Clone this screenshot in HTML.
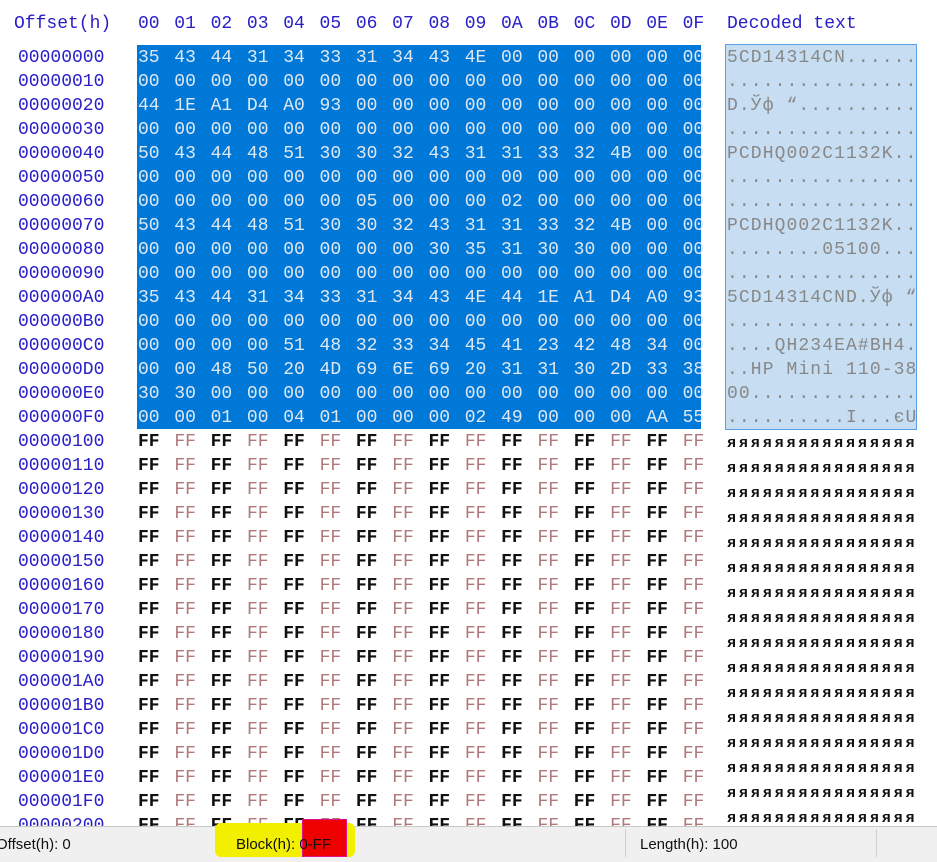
<!DOCTYPE html>
<html><head><meta charset="utf-8"><style>
body{margin:0;width:937px;height:861px;background:#fff;position:relative;overflow:hidden;font-family:"Liberation Mono","DejaVu Sans Mono",monospace;font-size:18px}
.hdr{position:absolute;top:12px;color:#2a20c8;white-space:pre;line-height:24px}
.col{position:absolute;top:46px;white-space:pre;line-height:24px}
.off{left:18px;color:#2a20c8}
.hex{left:138px;word-spacing:3.9px;color:#dfe8f2}
.hex b{font-weight:bold;color:#111}
.hex i{font-style:normal;color:#b07878}
.dec{left:727px;letter-spacing:1.1px;color:#888}
.dec2{color:#111;font-weight:bold;font-size:15px;letter-spacing:2.9px}
#sel{position:absolute;left:137px;top:45px;width:564px;height:384px;background:#0078d7}
#dsel{position:absolute;left:725px;top:44px;width:190px;height:384px;background:#c6ddf2;border:1px solid #5aa0e6}
#status{position:absolute;left:0;top:826px;width:937px;height:35px;background:#f0f0f0;border-top:1px solid #c8c8c8;font-family:"Liberation Sans",sans-serif;font-size:15px;color:#111}
#status span{position:absolute;top:9px}
</style></head><body>
<div id="sel"></div><div id="dsel"></div>
<div class="hdr" style="left:14px">Offset(h)</div>
<div class="hdr" style="left:138px;word-spacing:3.9px">00 01 02 03 04 05 06 07 08 09 0A 0B 0C 0D 0E 0F</div>
<div class="hdr" style="left:727px">Decoded text</div>
<div class="col off">00000000
00000010
00000020
00000030
00000040
00000050
00000060
00000070
00000080
00000090
000000A0
000000B0
000000C0
000000D0
000000E0
000000F0
00000100
00000110
00000120
00000130
00000140
00000150
00000160
00000170
00000180
00000190
000001A0
000001B0
000001C0
000001D0
000001E0
000001F0
00000200</div>
<div class="col hex">35 43 44 31 34 33 31 34 43 4E 00 00 00 00 00 00
00 00 00 00 00 00 00 00 00 00 00 00 00 00 00 00
44 1E A1 D4 A0 93 00 00 00 00 00 00 00 00 00 00
00 00 00 00 00 00 00 00 00 00 00 00 00 00 00 00
50 43 44 48 51 30 30 32 43 31 31 33 32 4B 00 00
00 00 00 00 00 00 00 00 00 00 00 00 00 00 00 00
00 00 00 00 00 00 05 00 00 00 02 00 00 00 00 00
50 43 44 48 51 30 30 32 43 31 31 33 32 4B 00 00
00 00 00 00 00 00 00 00 30 35 31 30 30 00 00 00
00 00 00 00 00 00 00 00 00 00 00 00 00 00 00 00
35 43 44 31 34 33 31 34 43 4E 44 1E A1 D4 A0 93
00 00 00 00 00 00 00 00 00 00 00 00 00 00 00 00
00 00 00 00 51 48 32 33 34 45 41 23 42 48 34 00
00 00 48 50 20 4D 69 6E 69 20 31 31 30 2D 33 38
30 30 00 00 00 00 00 00 00 00 00 00 00 00 00 00
00 00 01 00 04 01 00 00 00 02 49 00 00 00 AA 55
<b>FF</b> <i>FF</i> <b>FF</b> <i>FF</i> <b>FF</b> <i>FF</i> <b>FF</b> <i>FF</i> <b>FF</b> <i>FF</i> <b>FF</b> <i>FF</i> <b>FF</b> <i>FF</i> <b>FF</b> <i>FF</i>
<b>FF</b> <i>FF</i> <b>FF</b> <i>FF</i> <b>FF</b> <i>FF</i> <b>FF</b> <i>FF</i> <b>FF</b> <i>FF</i> <b>FF</b> <i>FF</i> <b>FF</b> <i>FF</i> <b>FF</b> <i>FF</i>
<b>FF</b> <i>FF</i> <b>FF</b> <i>FF</i> <b>FF</b> <i>FF</i> <b>FF</b> <i>FF</i> <b>FF</b> <i>FF</i> <b>FF</b> <i>FF</i> <b>FF</b> <i>FF</i> <b>FF</b> <i>FF</i>
<b>FF</b> <i>FF</i> <b>FF</b> <i>FF</i> <b>FF</b> <i>FF</i> <b>FF</b> <i>FF</i> <b>FF</b> <i>FF</i> <b>FF</b> <i>FF</i> <b>FF</b> <i>FF</i> <b>FF</b> <i>FF</i>
<b>FF</b> <i>FF</i> <b>FF</b> <i>FF</i> <b>FF</b> <i>FF</i> <b>FF</b> <i>FF</i> <b>FF</b> <i>FF</i> <b>FF</b> <i>FF</i> <b>FF</b> <i>FF</i> <b>FF</b> <i>FF</i>
<b>FF</b> <i>FF</i> <b>FF</b> <i>FF</i> <b>FF</b> <i>FF</i> <b>FF</b> <i>FF</i> <b>FF</b> <i>FF</i> <b>FF</b> <i>FF</i> <b>FF</b> <i>FF</i> <b>FF</b> <i>FF</i>
<b>FF</b> <i>FF</i> <b>FF</b> <i>FF</i> <b>FF</b> <i>FF</i> <b>FF</b> <i>FF</i> <b>FF</b> <i>FF</i> <b>FF</b> <i>FF</i> <b>FF</b> <i>FF</i> <b>FF</b> <i>FF</i>
<b>FF</b> <i>FF</i> <b>FF</b> <i>FF</i> <b>FF</b> <i>FF</i> <b>FF</b> <i>FF</i> <b>FF</b> <i>FF</i> <b>FF</b> <i>FF</i> <b>FF</b> <i>FF</i> <b>FF</b> <i>FF</i>
<b>FF</b> <i>FF</i> <b>FF</b> <i>FF</i> <b>FF</b> <i>FF</i> <b>FF</b> <i>FF</i> <b>FF</b> <i>FF</i> <b>FF</b> <i>FF</i> <b>FF</b> <i>FF</i> <b>FF</b> <i>FF</i>
<b>FF</b> <i>FF</i> <b>FF</b> <i>FF</i> <b>FF</b> <i>FF</i> <b>FF</b> <i>FF</i> <b>FF</b> <i>FF</i> <b>FF</b> <i>FF</i> <b>FF</b> <i>FF</i> <b>FF</b> <i>FF</i>
<b>FF</b> <i>FF</i> <b>FF</b> <i>FF</i> <b>FF</b> <i>FF</i> <b>FF</b> <i>FF</i> <b>FF</b> <i>FF</i> <b>FF</b> <i>FF</i> <b>FF</b> <i>FF</i> <b>FF</b> <i>FF</i>
<b>FF</b> <i>FF</i> <b>FF</b> <i>FF</i> <b>FF</b> <i>FF</i> <b>FF</b> <i>FF</i> <b>FF</b> <i>FF</i> <b>FF</b> <i>FF</i> <b>FF</b> <i>FF</i> <b>FF</b> <i>FF</i>
<b>FF</b> <i>FF</i> <b>FF</b> <i>FF</i> <b>FF</b> <i>FF</i> <b>FF</b> <i>FF</i> <b>FF</b> <i>FF</i> <b>FF</b> <i>FF</i> <b>FF</b> <i>FF</i> <b>FF</b> <i>FF</i>
<b>FF</b> <i>FF</i> <b>FF</b> <i>FF</i> <b>FF</b> <i>FF</i> <b>FF</b> <i>FF</i> <b>FF</b> <i>FF</i> <b>FF</b> <i>FF</i> <b>FF</b> <i>FF</i> <b>FF</b> <i>FF</i>
<b>FF</b> <i>FF</i> <b>FF</b> <i>FF</i> <b>FF</b> <i>FF</i> <b>FF</b> <i>FF</i> <b>FF</b> <i>FF</i> <b>FF</b> <i>FF</i> <b>FF</b> <i>FF</i> <b>FF</b> <i>FF</i>
<b>FF</b> <i>FF</i> <b>FF</b> <i>FF</i> <b>FF</b> <i>FF</i> <b>FF</b> <i>FF</i> <b>FF</b> <i>FF</i> <b>FF</b> <i>FF</i> <b>FF</b> <i>FF</i> <b>FF</b> <i>FF</i>
<b>FF</b> <i>FF</i> <b>FF</b> <i>FF</i> <b>FF</b> <i>FF</i> <b>FF</b> <i>FF</i> <b>FF</b> <i>FF</i> <b>FF</b> <i>FF</i> <b>FF</b> <i>FF</i> <b>FF</b> <i>FF</i></div>
<div class="col dec">5CD14314CN......
................
D.Ўф “..........
................
PCDHQ002C1132K..
................
................
PCDHQ002C1132K..
........05100...
................
5CD14314CND.Ўф “
................
....QH234EA#BH4.
..HP Mini 110-38
00..............
..........I...єU<span class="dec2">
яяяяяяяяяяяяяяяя
яяяяяяяяяяяяяяяя
яяяяяяяяяяяяяяяя
яяяяяяяяяяяяяяяя
яяяяяяяяяяяяяяяя
яяяяяяяяяяяяяяяя
яяяяяяяяяяяяяяяя
яяяяяяяяяяяяяяяя
яяяяяяяяяяяяяяяя
яяяяяяяяяяяяяяяя
яяяяяяяяяяяяяяяя
яяяяяяяяяяяяяяяя
яяяяяяяяяяяяяяяя
яяяяяяяяяяяяяяяя
яяяяяяяяяяяяяяяя
яяяяяяяяяяяяяяяя
яяяяяяяяяяяяяяяя</span></div>
<div id="status">
<div style="position:absolute;left:215px;top:-4px;width:140px;height:34px;background:#f2ef00;border-radius:6px"></div>
<div style="position:absolute;left:302px;top:-8px;width:43px;height:36px;background:#ee0000;border:1px solid #e0108a"></div>
<span style="left:-4px">Offset(h): 0</span>
<span style="left:236px">Block(h): 0-FF</span>
<span style="left:640px">Length(h): 100</span>
<div style="position:absolute;left:625px;top:2px;width:1px;height:28px;background:#d0d0d0"></div>
<div style="position:absolute;left:876px;top:2px;width:1px;height:28px;background:#d0d0d0"></div>
</div>
</body></html>
